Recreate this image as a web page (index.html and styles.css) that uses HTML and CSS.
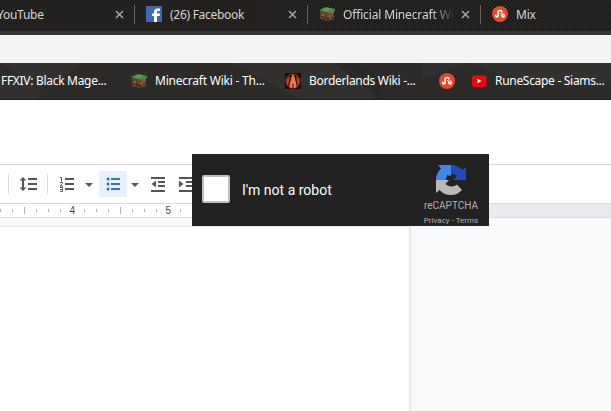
FILE: index.html
```html
<!DOCTYPE html>
<html lang="en">
<head>
<meta charset="utf-8">
<title>Browser</title>
<link rel="stylesheet" href="styles.css">
</head>
<body>
<svg class="defs" width="0" height="0">
  <symbol id="grass" viewBox="0 0 16 16">
    <path fill="#604029" d="M1 4l7 2v9l-7-2z"/><path fill="#70472e" d="M8 6l7-2v9l-7 2z"/>
    <path fill="#4d8748" d="M0 4l7-3 9 2v2l-2 1-2 0-2 1-3-1-2 0-2-1-3-1z"/>
    <path fill="#5d9a55" d="M3 3.500l5-2 5 1.500-6 2z"/>
    <path fill="#8b6548" d="M3 8h2v2H3zM10 9h2v2h-2zM12 6h2v2h-2z"/>
    <path fill="#382a20" d="M5 11h2v2H5zM8 12h2v2H8zM2 10h2v1H2zM12 11h2v1h-2z"/>
  </symbol>
  <symbol id="mix" viewBox="0 0 16 16">
    <circle cx="8" cy="8" r="8" fill="#e2492f"/>
    <path d="M3.700 8.800v1a1.200 1.200 0 0 0 2.400 0V6.400a1.900 1.900 0 0 1 3.800 0M9.900 8.600v1.200a1.200 1.200 0 0 0 2.400 0v-1" fill="none" stroke="#fff" stroke-width="1.600"/>
    <path d="M8 7.500l2 .8 2.300-.5" fill="none" stroke="#fff"/>
  </symbol>
  <symbol id="close" viewBox="0 0 9 9"><path d="M1 1l7 7M8 1L1 8" stroke="#a7a7a5" stroke-width="1.500"/></symbol>
</svg>
<div class="tabs">
  <div class="tab first"><span class="label youtube">YouTube</span><svg class="close"><use href="#close"/></svg></div>
  <div class="tab"><svg class="icon" viewBox="0 0 16 16"><path fill="#4267b2" d="M0 0h16v16H0z"/><path fill="#fff" d="M8 16v-6H6V7.500h2V6c0-2.200 1.200-3.500 3.500-3.500H14V5h-1.500C11.300 5 11 5.500 11 6.300v1.200h3l-.4 2.500H11v6z"/></svg><span class="label facebook">(26) Facebook</span><svg class="close"><use href="#close"/></svg></div>
  <div class="tab"><svg class="icon"><use href="#grass"/></svg><span class="label official">Official Minecraft Wi</span><svg class="close"><use href="#close"/></svg></div>
  <div class="tab last"><svg class="icon"><use href="#mix"/></svg><span class="label">Mix</span></div>
</div>
<div class="address"></div>
<div class="bookmarks">
  <svg class="theme" viewBox="0 0 611 37" preserveAspectRatio="none"><path fill="#323130" d="M0 0h80Q70 17 43 16L39 37H0V14q15-5 26 1zM232 0h102l45 37H300zM422 0h189v19q-80 10-140-19l-49 17z"/><path d="M345 0q35 10 33 37" fill="none" stroke="#292828" stroke-width="7"/></svg>
  <div class="mark ffxiv"><span>FFXIV: Black Mage...</span></div>
  <div class="mark minecraft"><svg class="icon"><use href="#grass"/></svg><span>Minecraft Wiki - Th...</span></div>
  <div class="mark border"><svg class="icon" viewBox="0 0 16 16"><path fill="#210d08" d="M0 0h16v16H0z"/><circle cx="8" cy="8" r="7" fill="none" stroke="#a34228"/><path fill="#ee7548" d="M7 2h2l3 11-2 2H6l-2-2z"/><path fill="#bd4e2d" d="M5 3L2 6v5l2 2zM11 3l3 3v5l-2 2z"/><path d="M6 2L3.500 13M10 2l2.500 11M8 11v4" stroke="#210d08" fill="none"/></svg><span>Borderlands Wiki -...</span></div>
  <div class="mark mix"><svg class="icon"><use href="#mix"/></svg></div>
  <div class="mark rune"><svg class="icon" viewBox="0 0 16 16"><rect x="1" y="2.500" width="14.500" height="11.500" rx="2.500" fill="#e50914"/><path fill="#fff" d="M6.500 5.700l4 2.300-4 2.300z"/></svg><span>RuneScape - Siams...</span></div>
</div>
<div class="docs-head"></div>
<div class="toolbar">
  <svg width="200" height="38" viewBox="0 0 200 38">
    <path d="M8.500 9v20M47.500 9v20" stroke="#dadce0"/>
    <path fill="#e8f0fe" d="M99 6h28v26H99z"/>
    <g stroke="#555659" stroke-width="2" fill="none">
      <path d="M28 14h9M28 19h9M28 24h9M23 14v10M65 14h9M65 19h9M65 24h9"/>
      <path d="M151 13h14M158 17h7M158 21h7M151 26h14M179 13h14M186 17h7M186 21h7M179 26h14"/>
      <path stroke-width="1" d="M60 12.500h1.500v4M60 17.500h2.500v1L60 21h3M60 22.500h2.500v4H60M60 24.500h2"/>
    </g>
    <path fill="#555659" d="M19.500 15.500L23 12l3.500 3.500zM19.500 22.500L23 26l3.500-3.500zM85 18h8l-4 4zM131 18h8l-4 4zM156 15.500v7L151.500 19zM179 15.500v7l4.500-3.500z"/>
    <path d="M111 14h9M111 19h9M111 24h9" stroke="#3c73bb" stroke-width="2"/>
    <g fill="#3569ca"><circle cx="108" cy="14" r="1.500"/><circle cx="108" cy="19" r="1.500"/><circle cx="108" cy="24" r="1.500"/></g>
  </svg>
</div>
<div class="ruler">
  <svg width="200" height="14" viewBox="0 0 200 14">
    <path d="M.5 5v3M12.500 5v3M36.500 5v3M48.500 5v3M60.500 5v3M84.500 5v3M96.500 5v3M108.500 5v3M132.500 5v3M144.500 5v3M156.500 5v3M180.500 5v3M24.500 3v7M120.500 3v7" stroke="#b5b5b5"/>
    <text x="69.500" y="10">4</text><text x="165.500" y="10">5</text>
  </svg>
  <div class="margin"></div>
</div>
<div class="canvas"><div class="page"></div></div>
<div class="captcha">
  <div class="box"></div>
  <span class="robot">I'm not a robot</span>
  <div class="brand">
    <svg width="32" height="32" viewBox="0 0 32 32">
      <path fill="#2349b8" d="M16 1c5 0 9 2 11.500 5L31 3v13H18l4-4c-1.500-1.500-3-2-6-2z"/>
      <path fill="#4285e8" d="M16 1v11l-4-1-1 5H1C1 11 3 7 6 4.500L3 1h13z"/>
      <path fill="#b8b8b8" d="M1 16h13l-3.500 4c1.500 1.500 3.500 2.500 6 2.500 2.500 0 4-1 5.500-2l5 5.500c-3 3-6 5-11 5s-9-2-11.500-5L1 29z"/>
    </svg>
    <span class="name">reCAPTCHA</span>
    <span class="legal">Privacy - Terms</span>
  </div>
</div>
</body>
</html>
```
FILE: styles.css
```css
* { box-sizing: border-box; }
body {
  margin: 0;
  width: 611px;
  height: 411px;
  overflow: hidden;
  display: flex;
  flex-direction: column;
  background: #fff;
  font: 12px/16px "Noto Sans", "Open Sans", sans-serif;
}
svg { display: block; flex: none; }
.defs { position: absolute; }
.tabs {
  height: 35px;
  flex: none;
  display: flex;
  padding-bottom: 7px;
  color: #d5d5d3;
  background:
    linear-gradient(#343433, #343433) 0 100% / 100% 4px no-repeat,
    repeating-linear-gradient(135deg, #1d1c1a 0 1.4px, #302f2d 2.1px 2.828px);
}
.tab {
  flex: none;
  width: 173px;
  display: flex;
  align-items: center;
  padding: 0 11px;
  position: relative;
}
.tab::after {
  content: "";
  position: absolute;
  right: 0;
  top: 5px;
  width: 1px;
  height: 19px;
  background: #62615e;
}
.tab.first { width: 135px; padding-left: 0; }
.tab.last { width: 130px; }
.tab.last::after { display: none; }
.icon { width: 16px; height: 16px; margin-right: 8px; }
.label { white-space: nowrap; letter-spacing: -0.25px; padding-top: 1px; }
.youtube { margin-left: -3px; }
.facebook { letter-spacing: -0.28px; }
.official {
  letter-spacing: -0.15px;
  mask-image: linear-gradient(90deg, #000 88px, transparent 112px);
}
.close { width: 9px; height: 9px; margin-left: auto; }
.address { height: 28px; flex: none; background: #f1f3f4; }
.bookmarks {
  height: 37px;
  flex: none;
  display: flex;
  align-items: center;
  position: relative;
  color: #fff;
  background: #2c2b2a;
  border-bottom: 1px solid #1e1e1e;
}
.theme { position: absolute; inset: 0; width: 100%; height: 100%; }
.mark {
  display: flex;
  align-items: center;
  white-space: nowrap;
  position: relative;
  letter-spacing: -0.3px;
}
.ffxiv { width: 131px; padding-left: 1px; }
.minecraft { width: 154px; letter-spacing: -0.22px; }
.border { width: 154px; }
.mix { width: 32px; }
.docs-head { height: 64px; flex: none; }
.toolbar { height: 39px; flex: none; border-top: 1px solid #dadce0; }
.ruler {
  height: 15px;
  flex: none;
  display: flex;
  border: solid #dadce0;
  border-width: 1px 0;
}
.ruler text { font: 10px "Liberation Sans", sans-serif; fill: #454545; }
.margin { margin-left: 209px; flex: 1; background: #e8eaed; }
.canvas { flex: 1; background: #f8f9fa; padding-top: 8px; }
.page {
  width: 410px;
  height: 100%;
  background: #fff;
  border: solid #e4e5e7;
  border-width: 1px 1px 0 0;
  box-shadow: 1px 0 2px #e5e6e8;
}
.captcha {
  position: absolute;
  left: 192px;
  top: 154px;
  width: 297px;
  height: 72px;
  display: flex;
  align-items: center;
  padding-left: 10px;
  background: #222;
  color: #fff;
  font-family: Roboto, sans-serif;
}
.box {
  width: 28px;
  height: 28px;
  margin-top: -2px;
  border: 2px solid #c1c1c1;
  border-radius: 2px;
  background: #fff;
}
.robot { margin-left: 12px; font-size: 14px; white-space: nowrap; }
.brand {
  margin-left: auto;
  width: 76px;
  height: 72px;
  padding-top: 10px;
  display: flex;
  flex-direction: column;
  align-items: center;
  color: #b0b0b0;
}
.name { font-size: 10px; line-height: 12px; margin-top: 4px; }
.legal { font-size: 8px; line-height: 10px; margin-top: 4px; }
```
